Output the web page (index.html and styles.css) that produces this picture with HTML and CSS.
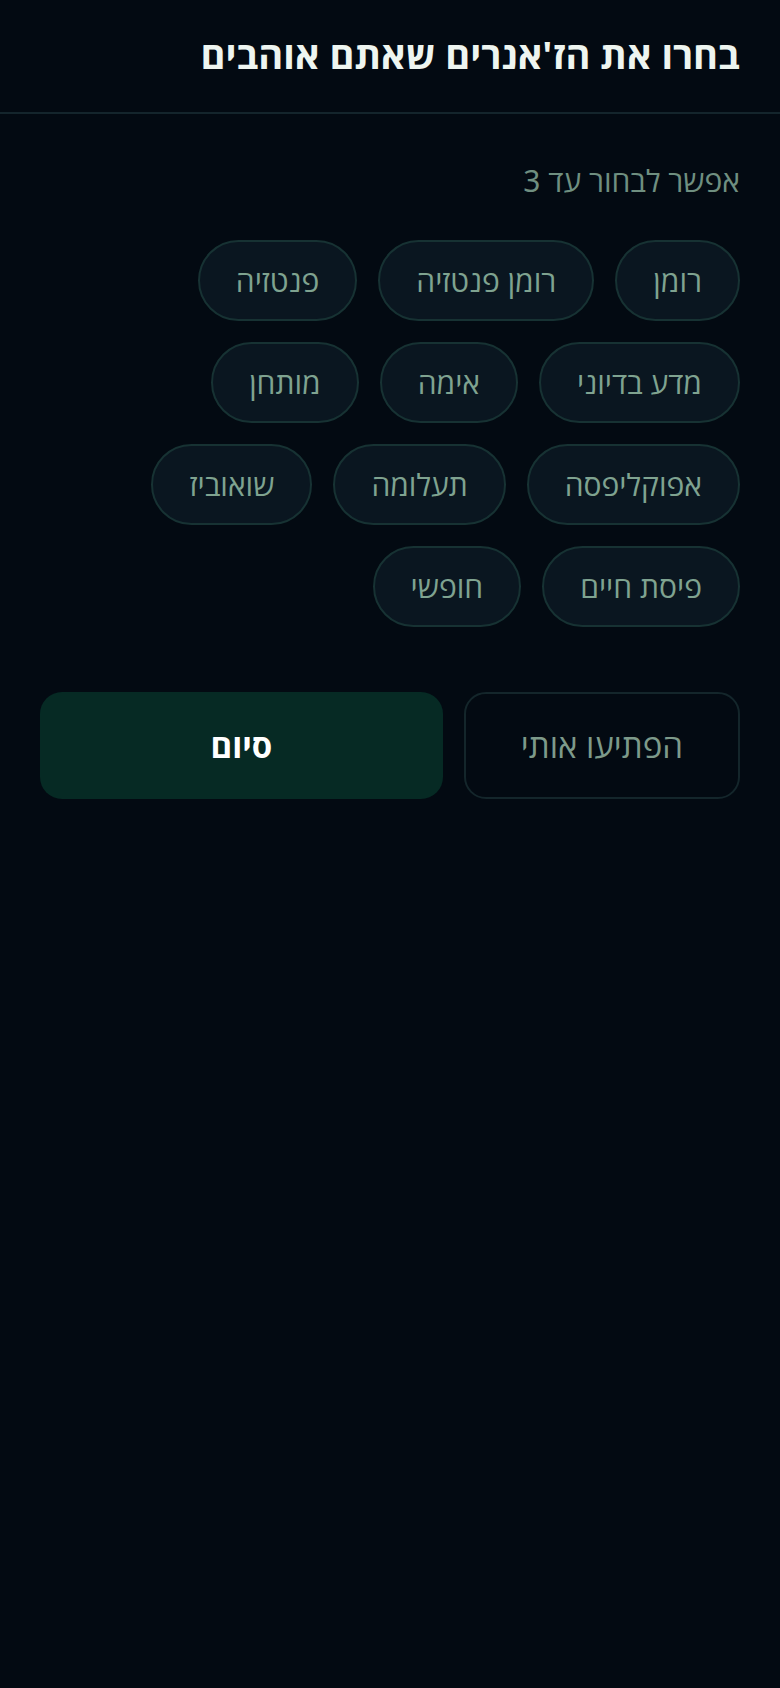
FILE: index.html
```html
<!DOCTYPE html>
<html lang="he" dir="rtl">
<head>
    <meta charset="UTF-8">
    <meta name="viewport" content="width=device-width, initial-scale=1.0">
    <title>בחירת ז'אנרים</title>
    <link rel="stylesheet" href="styles.css">
</head>
<body>

<div class="header">
    <h1>בחרו את הז'אנרים שאתם אוהבים</h1>
</div>

<div class="content">
    <p class="hint">אפשר לבחור עד 3</p>

    <div class="genres">
        <button class="chip">רומן</button>
        <button class="chip">רומן פנטזיה</button>
        <button class="chip">פנטזיה</button>
        <button class="chip">מדע בדיוני</button>
        <button class="chip">אימה</button>
        <button class="chip">מותחן</button>
        <button class="chip">אפוקליפסה</button>
        <button class="chip">תעלומה</button>
        <button class="chip">שואוביז</button>
        <button class="chip">פיסת חיים</button>
        <button class="chip">חופשי</button>
    </div>

    <div class="actions">
        <button class="btn btn-surprise">הפתיעו אותי</button>
        <button class="btn btn-done">סיום</button>
    </div>
</div>

</body>
</html>
```

FILE: styles.css
```css
body {
    font-family: "Noto Sans", "Open Sans", "DejaVu Sans", sans-serif;
    margin: 0;
    background-color: #030a12;
    min-height: 100vh;
}
.header {
    padding: 31px 40px 35px;
    border-bottom: 2px solid #14252c;
}
h1 {
    margin: 0;
    font-family: "Open Sans", "Noto Sans", sans-serif;
    font-size: 38px;
    line-height: 46px;
    font-weight: bold;
    color: #eef5f0;
}
.content {
    padding: 46px 40px 40px;
}
.hint {
    margin: 0 0 39px;
    font-size: 30px;
    line-height: 41px;
    color: #6f8f80;
}
.genres {
    display: flex;
    flex-wrap: wrap;
    gap: 21px;
}
.chip {
    font-family: inherit;
    font-size: 30px;
    line-height: 41px;
    padding: 18px 36px;
    color: #7fa390;
    background-color: #0a1620;
    border: 2px solid #173233;
    border-radius: 41px;
}
.actions {
    display: flex;
    gap: 21px;
    margin-top: 65px;
}
.btn {
    font-family: inherit;
    font-size: 33px;
    height: 107px;
    border-radius: 22px;
}
.btn-surprise {
    padding: 0 55px;
    font-weight: 500;
    background: transparent;
    color: #7d9a8a;
    border: 2px solid #14262b;
}
.btn-done {
    flex: 1;
    font-family: "Open Sans", "Noto Sans", sans-serif;
    background-color: #062a24;
    color: #ffffff;
    font-weight: bold;
    border: none;
}
```
